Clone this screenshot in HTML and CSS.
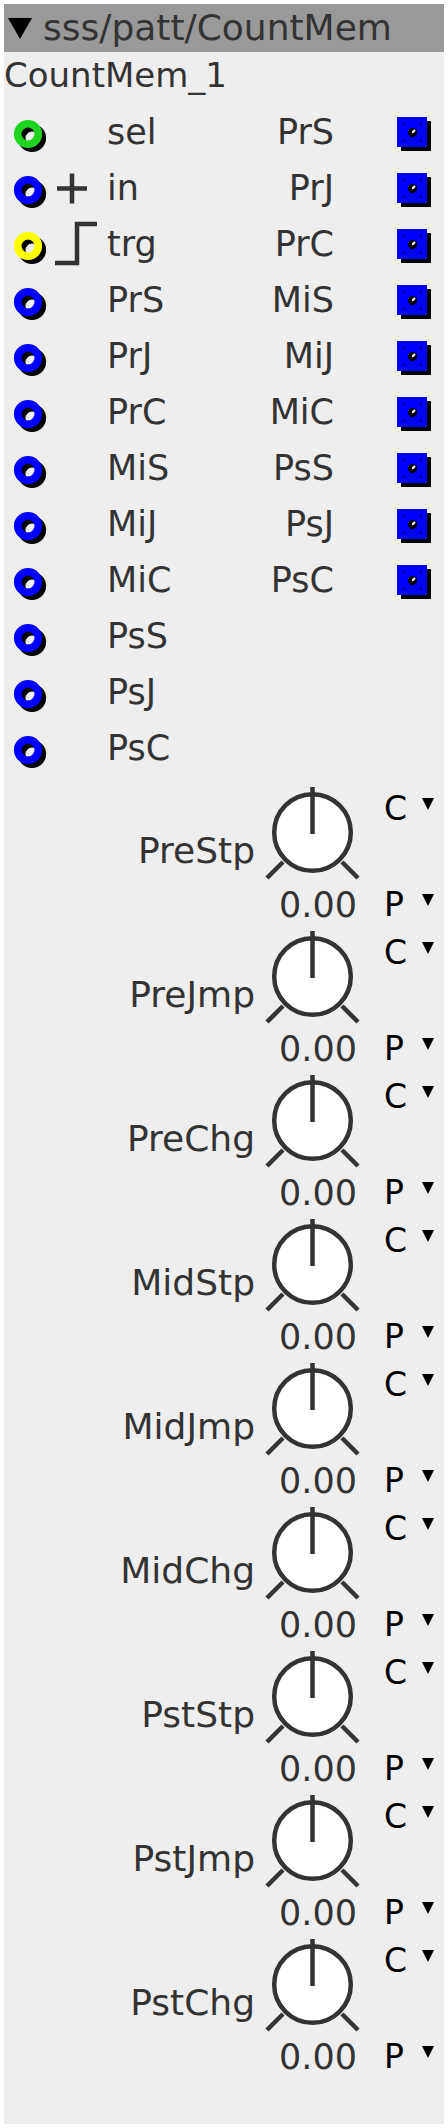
FILE: index.html
```html
<!DOCTYPE html>
<html lang="en">
<head>
    <meta charset="UTF-8">
    <title>sss/patt/CountMem</title>
    <link rel="stylesheet" href="styles.css">
</head>
<body>
    <div class="panel">
        <div class="title-bar">
            <svg class="collapse" viewBox="0 0 24 21"><polygon points="0,0 24,0 12,21"/></svg>
            <span>sss/patt/CountMem</span>
        </div>
        <div class="name">CountMem_1</div>

        <!-- ports: input | hint | in label | out label | output -->
        <div class="port-row">
            <svg class="port-in" viewBox="0 0 40 40"><circle class="ring-shadow" cx="24" cy="24" r="10.3"/><circle class="ring green" cx="20" cy="20" r="10.3"/></svg>
            <span></span>
            <span class="in-label">sel</span>
            <span class="out-label">PrS</span>
            <svg class="port-out" viewBox="0 0 36 36"><rect x="4" y="4" width="30" height="30"/><rect class="sq" width="30" height="30"/><circle cx="15.5" cy="15.5" r="4.6"/><ellipse class="hl" cx="16.6" cy="14.4" rx="2.2" ry="1.2" transform="rotate(-40 16.6 14.4)"/><rect x="6" y="6" width="1.5" height="1.5"/><rect x="23" y="6" width="1.5" height="1.5"/><rect x="6" y="23" width="1.5" height="1.5"/><rect x="23" y="23" width="1.5" height="1.5"/></svg>
        </div>
        <div class="port-row">
            <svg class="port-in" viewBox="0 0 40 40"><circle class="ring-shadow" cx="24" cy="24" r="10.3"/><circle class="ring blue" cx="20" cy="20" r="10.3"/></svg>
            <svg class="hint" viewBox="0 0 59 56"><path d="M9,28.5 H39 M24,13.5 V43.5"/></svg>
            <span class="in-label">in</span>
            <span class="out-label">PrJ</span>
            <svg class="port-out" viewBox="0 0 36 36"><rect x="4" y="4" width="30" height="30"/><rect class="sq" width="30" height="30"/><circle cx="15.5" cy="15.5" r="4.6"/><ellipse class="hl" cx="16.6" cy="14.4" rx="2.2" ry="1.2" transform="rotate(-40 16.6 14.4)"/><rect x="6" y="6" width="1.5" height="1.5"/><rect x="23" y="6" width="1.5" height="1.5"/><rect x="6" y="23" width="1.5" height="1.5"/><rect x="23" y="23" width="1.5" height="1.5"/></svg>
        </div>
        <div class="port-row">
            <svg class="port-in" viewBox="0 0 40 40"><circle class="ring-shadow" cx="24" cy="24" r="10.3"/><circle class="ring yellow" cx="20" cy="20" r="10.3"/></svg>
            <svg class="hint" viewBox="0 0 59 56"><path d="M7,47 H29 V8 H49"/></svg>
            <span class="in-label">trg</span>
            <span class="out-label">PrC</span>
            <svg class="port-out" viewBox="0 0 36 36"><rect x="4" y="4" width="30" height="30"/><rect class="sq" width="30" height="30"/><circle cx="15.5" cy="15.5" r="4.6"/><ellipse class="hl" cx="16.6" cy="14.4" rx="2.2" ry="1.2" transform="rotate(-40 16.6 14.4)"/><rect x="6" y="6" width="1.5" height="1.5"/><rect x="23" y="6" width="1.5" height="1.5"/><rect x="6" y="23" width="1.5" height="1.5"/><rect x="23" y="23" width="1.5" height="1.5"/></svg>
        </div>
        <div class="port-row">
            <svg class="port-in" viewBox="0 0 40 40"><circle class="ring-shadow" cx="24" cy="24" r="10.3"/><circle class="ring blue" cx="20" cy="20" r="10.3"/></svg>
            <span></span>
            <span class="in-label">PrS</span>
            <span class="out-label">MiS</span>
            <svg class="port-out" viewBox="0 0 36 36"><rect x="4" y="4" width="30" height="30"/><rect class="sq" width="30" height="30"/><circle cx="15.5" cy="15.5" r="4.6"/><ellipse class="hl" cx="16.6" cy="14.4" rx="2.2" ry="1.2" transform="rotate(-40 16.6 14.4)"/><rect x="6" y="6" width="1.5" height="1.5"/><rect x="23" y="6" width="1.5" height="1.5"/><rect x="6" y="23" width="1.5" height="1.5"/><rect x="23" y="23" width="1.5" height="1.5"/></svg>
        </div>
        <div class="port-row">
            <svg class="port-in" viewBox="0 0 40 40"><circle class="ring-shadow" cx="24" cy="24" r="10.3"/><circle class="ring blue" cx="20" cy="20" r="10.3"/></svg>
            <span></span>
            <span class="in-label">PrJ</span>
            <span class="out-label">MiJ</span>
            <svg class="port-out" viewBox="0 0 36 36"><rect x="4" y="4" width="30" height="30"/><rect class="sq" width="30" height="30"/><circle cx="15.5" cy="15.5" r="4.6"/><ellipse class="hl" cx="16.6" cy="14.4" rx="2.2" ry="1.2" transform="rotate(-40 16.6 14.4)"/><rect x="6" y="6" width="1.5" height="1.5"/><rect x="23" y="6" width="1.5" height="1.5"/><rect x="6" y="23" width="1.5" height="1.5"/><rect x="23" y="23" width="1.5" height="1.5"/></svg>
        </div>
        <div class="port-row">
            <svg class="port-in" viewBox="0 0 40 40"><circle class="ring-shadow" cx="24" cy="24" r="10.3"/><circle class="ring blue" cx="20" cy="20" r="10.3"/></svg>
            <span></span>
            <span class="in-label">PrC</span>
            <span class="out-label">MiC</span>
            <svg class="port-out" viewBox="0 0 36 36"><rect x="4" y="4" width="30" height="30"/><rect class="sq" width="30" height="30"/><circle cx="15.5" cy="15.5" r="4.6"/><ellipse class="hl" cx="16.6" cy="14.4" rx="2.2" ry="1.2" transform="rotate(-40 16.6 14.4)"/><rect x="6" y="6" width="1.5" height="1.5"/><rect x="23" y="6" width="1.5" height="1.5"/><rect x="6" y="23" width="1.5" height="1.5"/><rect x="23" y="23" width="1.5" height="1.5"/></svg>
        </div>
        <div class="port-row">
            <svg class="port-in" viewBox="0 0 40 40"><circle class="ring-shadow" cx="24" cy="24" r="10.3"/><circle class="ring blue" cx="20" cy="20" r="10.3"/></svg>
            <span></span>
            <span class="in-label">MiS</span>
            <span class="out-label">PsS</span>
            <svg class="port-out" viewBox="0 0 36 36"><rect x="4" y="4" width="30" height="30"/><rect class="sq" width="30" height="30"/><circle cx="15.5" cy="15.5" r="4.6"/><ellipse class="hl" cx="16.6" cy="14.4" rx="2.2" ry="1.2" transform="rotate(-40 16.6 14.4)"/><rect x="6" y="6" width="1.5" height="1.5"/><rect x="23" y="6" width="1.5" height="1.5"/><rect x="6" y="23" width="1.5" height="1.5"/><rect x="23" y="23" width="1.5" height="1.5"/></svg>
        </div>
        <div class="port-row">
            <svg class="port-in" viewBox="0 0 40 40"><circle class="ring-shadow" cx="24" cy="24" r="10.3"/><circle class="ring blue" cx="20" cy="20" r="10.3"/></svg>
            <span></span>
            <span class="in-label">MiJ</span>
            <span class="out-label">PsJ</span>
            <svg class="port-out" viewBox="0 0 36 36"><rect x="4" y="4" width="30" height="30"/><rect class="sq" width="30" height="30"/><circle cx="15.5" cy="15.5" r="4.6"/><ellipse class="hl" cx="16.6" cy="14.4" rx="2.2" ry="1.2" transform="rotate(-40 16.6 14.4)"/><rect x="6" y="6" width="1.5" height="1.5"/><rect x="23" y="6" width="1.5" height="1.5"/><rect x="6" y="23" width="1.5" height="1.5"/><rect x="23" y="23" width="1.5" height="1.5"/></svg>
        </div>
        <div class="port-row">
            <svg class="port-in" viewBox="0 0 40 40"><circle class="ring-shadow" cx="24" cy="24" r="10.3"/><circle class="ring blue" cx="20" cy="20" r="10.3"/></svg>
            <span></span>
            <span class="in-label">MiC</span>
            <span class="out-label">PsC</span>
            <svg class="port-out" viewBox="0 0 36 36"><rect x="4" y="4" width="30" height="30"/><rect class="sq" width="30" height="30"/><circle cx="15.5" cy="15.5" r="4.6"/><ellipse class="hl" cx="16.6" cy="14.4" rx="2.2" ry="1.2" transform="rotate(-40 16.6 14.4)"/><rect x="6" y="6" width="1.5" height="1.5"/><rect x="23" y="6" width="1.5" height="1.5"/><rect x="6" y="23" width="1.5" height="1.5"/><rect x="23" y="23" width="1.5" height="1.5"/></svg>
        </div>
        <div class="port-row">
            <svg class="port-in" viewBox="0 0 40 40"><circle class="ring-shadow" cx="24" cy="24" r="10.3"/><circle class="ring blue" cx="20" cy="20" r="10.3"/></svg>
            <span></span>
            <span class="in-label">PsS</span>
        </div>
        <div class="port-row">
            <svg class="port-in" viewBox="0 0 40 40"><circle class="ring-shadow" cx="24" cy="24" r="10.3"/><circle class="ring blue" cx="20" cy="20" r="10.3"/></svg>
            <span></span>
            <span class="in-label">PsJ</span>
        </div>
        <div class="port-row">
            <svg class="port-in" viewBox="0 0 40 40"><circle class="ring-shadow" cx="24" cy="24" r="10.3"/><circle class="ring blue" cx="20" cy="20" r="10.3"/></svg>
            <span></span>
            <span class="in-label">PsC</span>
        </div>

        <!-- knobs -->
        <div class="knobs">
            <div class="knob-row">
                <div class="knob-label">PreStp</div>
                <div class="knob-col">
                    <svg class="knob" viewBox="0 0 96 96"><circle cx="47.5" cy="49.5" r="38.3"/><path d="M47.5,4 V51 M18,79 L2,95 M77,79 L93,95"/></svg>
                    <div class="knob-value">0.00</div>
                </div>
                <div class="knob-opts">
                    <div class="opt"><span class="opt-key">C</span><span class="drop"></span></div>
                    <div class="opt"><span class="opt-key">P</span><span class="drop"></span></div>
                </div>
            </div>
            <div class="knob-row">
                <div class="knob-label">PreJmp</div>
                <div class="knob-col">
                    <svg class="knob" viewBox="0 0 96 96"><circle cx="47.5" cy="49.5" r="38.3"/><path d="M47.5,4 V51 M18,79 L2,95 M77,79 L93,95"/></svg>
                    <div class="knob-value">0.00</div>
                </div>
                <div class="knob-opts">
                    <div class="opt"><span class="opt-key">C</span><span class="drop"></span></div>
                    <div class="opt"><span class="opt-key">P</span><span class="drop"></span></div>
                </div>
            </div>
            <div class="knob-row">
                <div class="knob-label">PreChg</div>
                <div class="knob-col">
                    <svg class="knob" viewBox="0 0 96 96"><circle cx="47.5" cy="49.5" r="38.3"/><path d="M47.5,4 V51 M18,79 L2,95 M77,79 L93,95"/></svg>
                    <div class="knob-value">0.00</div>
                </div>
                <div class="knob-opts">
                    <div class="opt"><span class="opt-key">C</span><span class="drop"></span></div>
                    <div class="opt"><span class="opt-key">P</span><span class="drop"></span></div>
                </div>
            </div>
            <div class="knob-row">
                <div class="knob-label">MidStp</div>
                <div class="knob-col">
                    <svg class="knob" viewBox="0 0 96 96"><circle cx="47.5" cy="49.5" r="38.3"/><path d="M47.5,4 V51 M18,79 L2,95 M77,79 L93,95"/></svg>
                    <div class="knob-value">0.00</div>
                </div>
                <div class="knob-opts">
                    <div class="opt"><span class="opt-key">C</span><span class="drop"></span></div>
                    <div class="opt"><span class="opt-key">P</span><span class="drop"></span></div>
                </div>
            </div>
            <div class="knob-row">
                <div class="knob-label">MidJmp</div>
                <div class="knob-col">
                    <svg class="knob" viewBox="0 0 96 96"><circle cx="47.5" cy="49.5" r="38.3"/><path d="M47.5,4 V51 M18,79 L2,95 M77,79 L93,95"/></svg>
                    <div class="knob-value">0.00</div>
                </div>
                <div class="knob-opts">
                    <div class="opt"><span class="opt-key">C</span><span class="drop"></span></div>
                    <div class="opt"><span class="opt-key">P</span><span class="drop"></span></div>
                </div>
            </div>
            <div class="knob-row">
                <div class="knob-label">MidChg</div>
                <div class="knob-col">
                    <svg class="knob" viewBox="0 0 96 96"><circle cx="47.5" cy="49.5" r="38.3"/><path d="M47.5,4 V51 M18,79 L2,95 M77,79 L93,95"/></svg>
                    <div class="knob-value">0.00</div>
                </div>
                <div class="knob-opts">
                    <div class="opt"><span class="opt-key">C</span><span class="drop"></span></div>
                    <div class="opt"><span class="opt-key">P</span><span class="drop"></span></div>
                </div>
            </div>
            <div class="knob-row">
                <div class="knob-label">PstStp</div>
                <div class="knob-col">
                    <svg class="knob" viewBox="0 0 96 96"><circle cx="47.5" cy="49.5" r="38.3"/><path d="M47.5,4 V51 M18,79 L2,95 M77,79 L93,95"/></svg>
                    <div class="knob-value">0.00</div>
                </div>
                <div class="knob-opts">
                    <div class="opt"><span class="opt-key">C</span><span class="drop"></span></div>
                    <div class="opt"><span class="opt-key">P</span><span class="drop"></span></div>
                </div>
            </div>
            <div class="knob-row">
                <div class="knob-label">PstJmp</div>
                <div class="knob-col">
                    <svg class="knob" viewBox="0 0 96 96"><circle cx="47.5" cy="49.5" r="38.3"/><path d="M47.5,4 V51 M18,79 L2,95 M77,79 L93,95"/></svg>
                    <div class="knob-value">0.00</div>
                </div>
                <div class="knob-opts">
                    <div class="opt"><span class="opt-key">C</span><span class="drop"></span></div>
                    <div class="opt"><span class="opt-key">P</span><span class="drop"></span></div>
                </div>
            </div>
            <div class="knob-row">
                <div class="knob-label">PstChg</div>
                <div class="knob-col">
                    <svg class="knob" viewBox="0 0 96 96"><circle cx="47.5" cy="49.5" r="38.3"/><path d="M47.5,4 V51 M18,79 L2,95 M77,79 L93,95"/></svg>
                    <div class="knob-value">0.00</div>
                </div>
                <div class="knob-opts">
                    <div class="opt"><span class="opt-key">C</span><span class="drop"></span></div>
                    <div class="opt"><span class="opt-key">P</span><span class="drop"></span></div>
                </div>
            </div>
        </div>
    </div>
</body>
</html>
```

FILE: styles.css
```css
body {
    margin: 0;
    background: #fff;
    font-family: "DejaVu Sans", sans-serif;
    color: #333;
}
.panel {
    margin: 4px;
    width: 440px;
    height: 2120px;
    background: #eee;
}
.title-bar {
    display: flex;
    align-items: center;
    height: 48px;
    background: #999;
    font-size: 36px;
    line-height: 48px;
}
.collapse {
    width: 24px;
    height: 21px;
    margin: 0 11px 0 4px;
    fill: #000;
}
.name {
    height: 52px;
    font-size: 34px;
    line-height: 46px;
}

/* port rows */
.port-row {
    display: grid;
    grid-template-columns: 40px 59px 1fr 120px 99px;
    height: 56px;
    padding: 0 11px 0 4px;
    font-size: 35px;
    line-height: 56px;
}
.port-in {
    width: 40px;
    height: 40px;
    margin-top: 9.5px;
}
.ring, .ring-shadow {
    fill: none;
    stroke-width: 7.6;
}
.ring-shadow { stroke: #000; }
.green { stroke: #1fd41f; }
.blue { stroke: #0000ff; }
.yellow { stroke: #ffff00; }
.hint {
    width: 59px;
    height: 56px;
    fill: none;
    stroke: #333;
    stroke-width: 4.5;
}
.out-label {
    text-align: right;
}
.port-out {
    width: 36px;
    height: 36px;
    margin: 13px 0 0 63px;
    fill: #000;
}
.port-out .sq { fill: #0000ff; }
.port-out .hl { fill: #fff; }

/* knobs */
.knobs {
    padding-top: 7px;
}
.knob-row {
    display: flex;
    height: 144px;
    padding-right: 9px;
}
.knob-label {
    flex: 1;
    text-align: right;
    padding: 48px 10px 0 0;
    font-size: 36px;
    line-height: 40px;
}
.knob-col {
    width: 96px;
}
.knob {
    display: block;
    width: 96px;
    height: 96px;
    overflow: visible;
}
.knob circle {
    fill: #fff;
    stroke: #333;
    stroke-width: 4.5;
}
.knob path {
    fill: none;
    stroke: #333;
    stroke-width: 4.5;
}
.knob-value {
    margin-top: 6px;
    padding-right: 4px;
    text-align: right;
    font-size: 35px;
    line-height: 40px;
}
.knob-opts {
    width: 51px;
    margin-left: 23px;
    padding: 6px 0 2px;
    display: flex;
    flex-direction: column;
    justify-content: space-between;
}
.opt {
    display: flex;
    align-items: flex-start;
    height: 40px;
    color: #000;
    font-size: 33px;
    line-height: 40px;
}
.opt-key {
    width: 38px;
}
.drop {
    margin-top: 8.5px;
    width: 0;
    height: 0;
    border-left: 6.5px solid transparent;
    border-right: 6.5px solid transparent;
    border-top: 12px solid #000;
}
```
